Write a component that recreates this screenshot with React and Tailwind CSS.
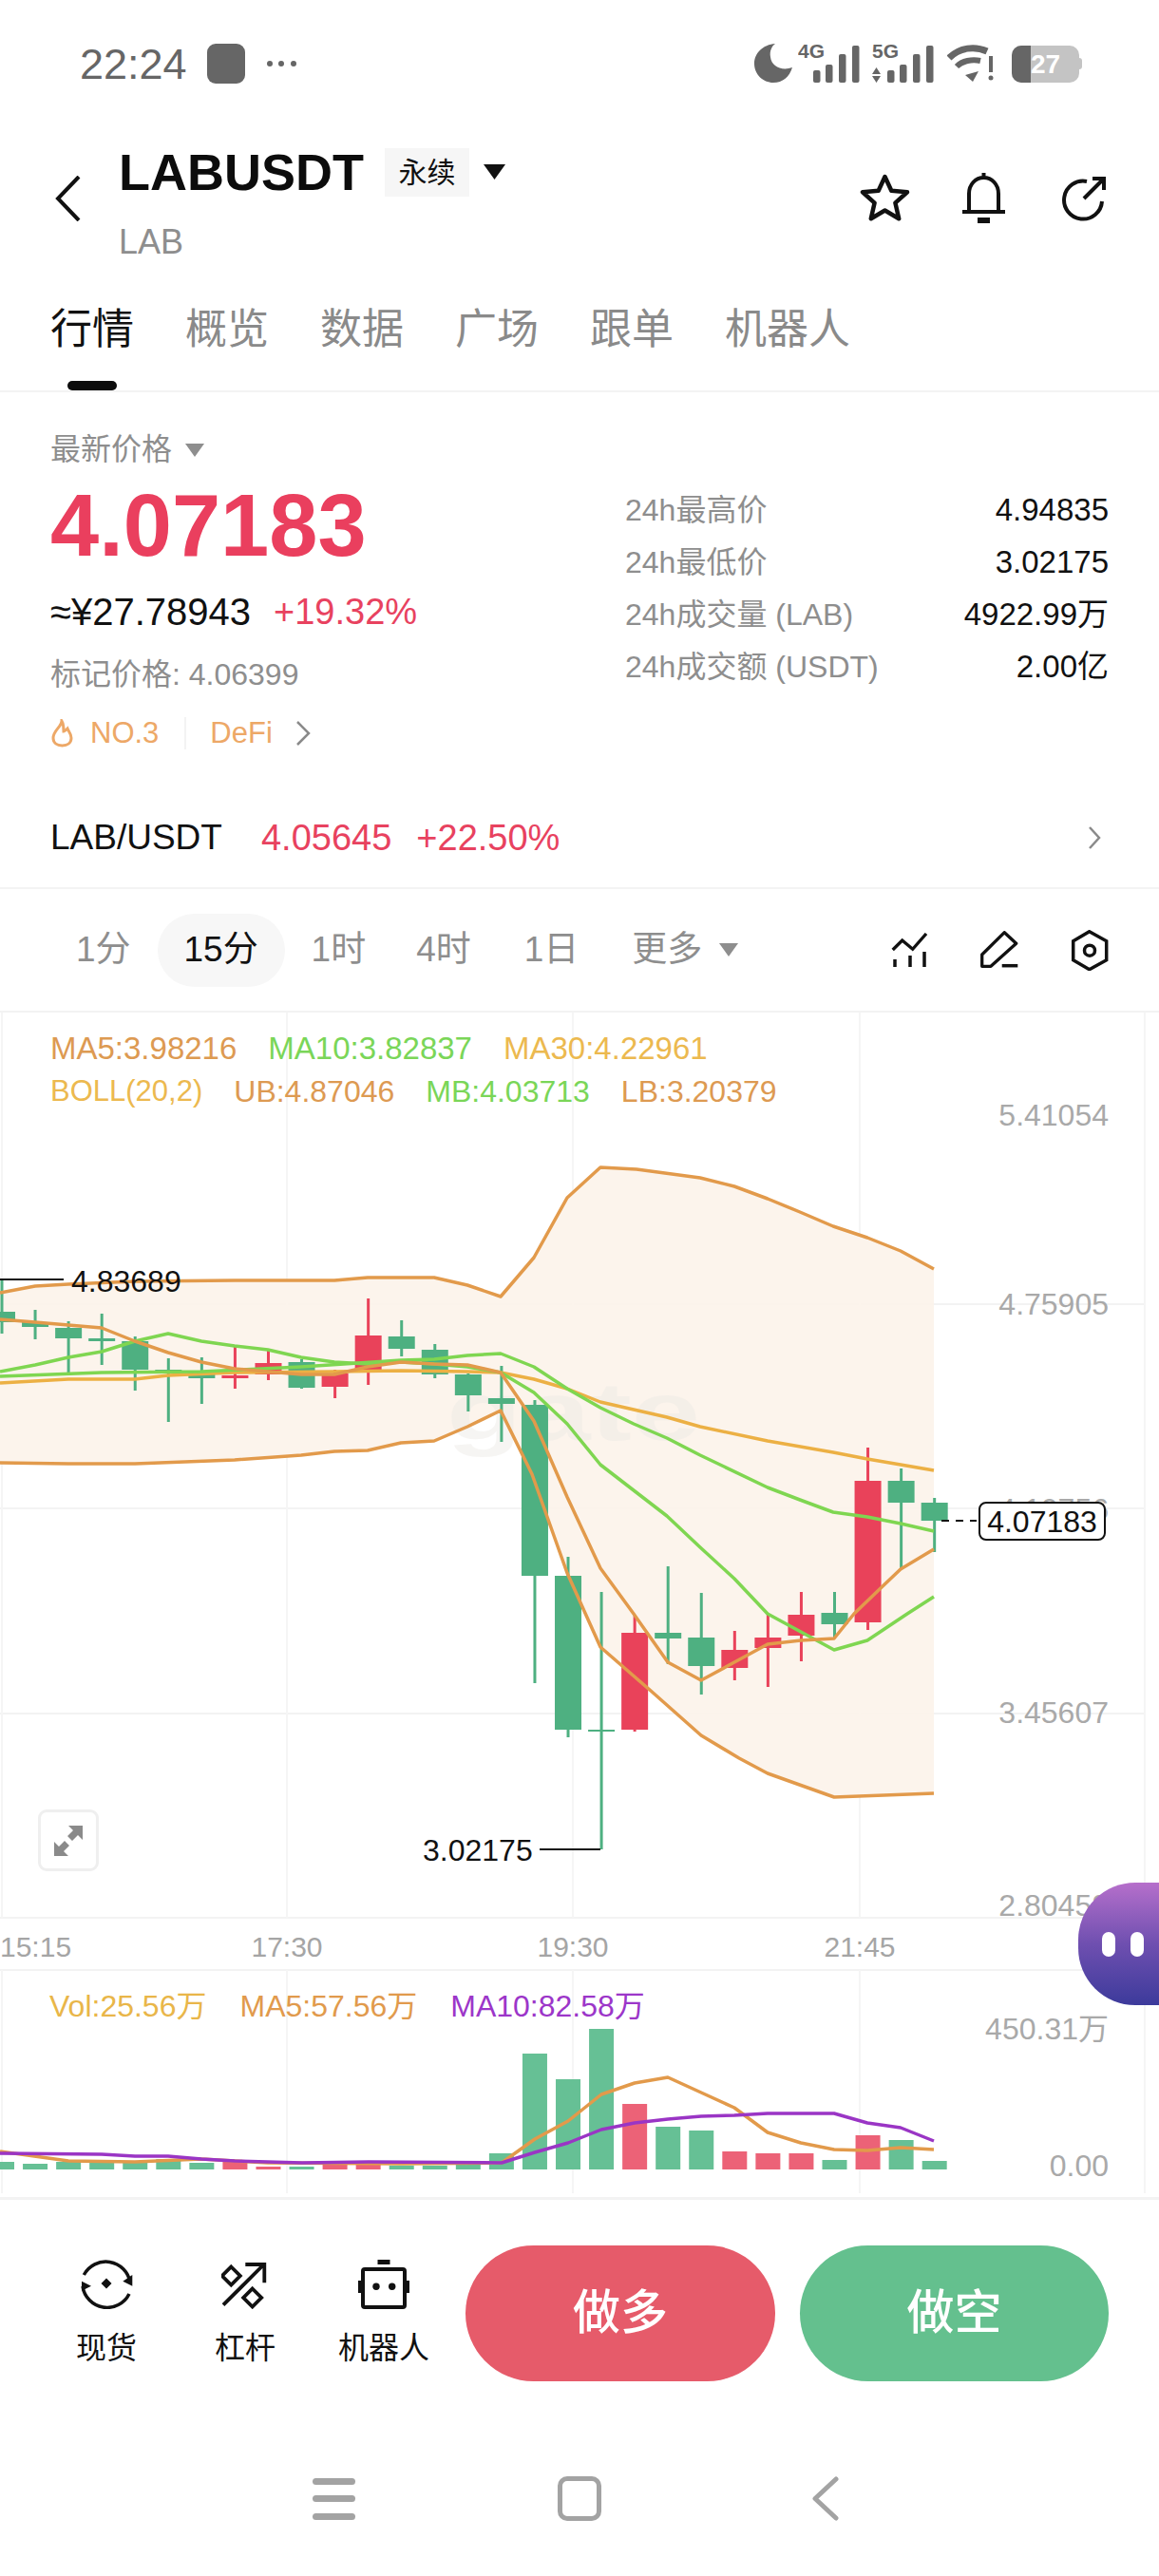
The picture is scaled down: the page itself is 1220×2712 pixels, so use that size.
import React from 'react';

const GREEN = '#4eb081';
const RED = '#e9425a';

// candles: [wick top, body top, body bottom, wick bottom, colour]
const candles = [
  [1348, 1382, 1393, 1405, GREEN], [1380, 1393, 1398, 1411, GREEN], [1392, 1399, 1410, 1447, GREEN],
  [1384, 1410, 1413, 1438, GREEN], [1408, 1413, 1443, 1465, GREEN], [1431, 1443, 1446, 1498, GREEN],
  [1430, 1446, 1452, 1479, GREEN], [1418, 1449, 1452, 1463, RED], [1423, 1436, 1448, 1454, RED],
  [1432, 1435, 1462, 1463, GREEN], [1443, 1447, 1461, 1473, RED], [1368, 1407, 1443, 1459, RED],
  [1391, 1408, 1421, 1429, GREEN], [1416, 1422, 1448, 1452, GREEN], [1447, 1448, 1470, 1487, GREEN],
  [1439, 1473, 1479, 1519, GREEN], [1475, 1480, 1660, 1773, GREEN], [1640, 1660, 1822, 1830, GREEN],
  [1677, 1822, 1824, 1948, GREEN], [1702, 1720, 1822, 1824, RED], [1650, 1720, 1726, 1753, GREEN],
  [1678, 1725, 1755, 1785, GREEN], [1718, 1738, 1757, 1770, RED], [1700, 1725, 1736, 1777, RED],
  [1677, 1701, 1723, 1750, RED], [1677, 1699, 1711, 1726, GREEN], [1525, 1560, 1709, 1717, RED],
  [1547, 1560, 1583, 1653, GREEN], [1578, 1583, 1602, 1635, GREEN],
];

const upper = '0,1362 37,1355 72,1353 142,1350 247,1349 352,1349 387,1346 457,1346 492,1354 527,1366 562,1325 597,1262 632,1230 670,1232 737,1241 773,1250 808,1263 842,1277 877,1292 913,1304 948,1318 983,1337';
const lower = '0,1541 72,1542 142,1542 247,1538 317,1533 352,1529 387,1528 422,1520 457,1518 492,1503 527,1486 560,1553 597,1657 632,1735 685,1781 738,1828 778,1852 808,1868 878,1893 983,1889';
const ma5 = '0,1390 37,1393 72,1396 107,1399 142,1413 177,1425 212,1435 247,1442 282,1445 317,1448 352,1448 387,1440 422,1435 457,1437 492,1438 527,1446 562,1497 597,1577 632,1652 667,1700 703,1751 738,1770 773,1751 808,1732 843,1728 878,1726 899,1700 927,1673 948,1653 983,1632';
const ma10 = '0,1445 37,1438 72,1430 107,1424 142,1413 177,1405 212,1413 247,1418 282,1422 317,1430 352,1435 387,1437 422,1435 457,1437 492,1440 527,1446 562,1467 597,1500 632,1543 702,1597 737,1630 773,1663 808,1700 878,1738 913,1728 955,1700 983,1682';
const mb = '0,1450 107,1446 212,1445 317,1440 422,1433 457,1432 492,1428 527,1426 562,1440 597,1463 632,1483 667,1500 702,1515 737,1533 808,1567 842,1580 877,1593 913,1598 948,1605 983,1613';
const ma30 = '0,1457 72,1453 142,1453 177,1449 247,1446 352,1445 422,1444 492,1445 527,1446 562,1453 597,1463 632,1477 702,1493 737,1503 808,1518 877,1530 913,1537 983,1549';

const bandFill = upper + ' ' + lower.split(' ').reverse().join(' ');

const volTops = [2277, 2279, 2277, 2278, 2278, 2274, 2278, 2277, 2282, 2282, 2280, 2279, 2281, 2281, 2280, 2268, 2163, 2190, 2137, 2216, 2240, 2244, 2266, 2268, 2268, 2275, 2249, 2254, 2276];
const volRed = [7, 8, 10, 11, 19, 22, 23, 24, 26];
const volMa5 = '0,2266 72,2276 142,2277 212,2274 282,2278 423,2279 528,2278 563,2253 598,2234 633,2206 668,2194 703,2188 738,2204 773,2220 808,2246 843,2257 878,2264 913,2265 948,2262 983,2264';
const volMa10 = '0,2268 107,2269 142,2271 177,2271 212,2274 247,2276 318,2278 388,2277 528,2278 563,2267 598,2257 633,2243 668,2236 703,2232 738,2229 773,2228 808,2226 843,2226 878,2226 913,2236 948,2241 983,2255';

function ChartLine({ points, color, width = 3.5 }) {
  return <polyline points={points} fill="none" stroke={color} strokeWidth={width} strokeLinejoin="round" />;
}

function AxisLabel({ y, children }) {
  return <text x="1167" y={y} textAnchor="end" fontSize="32" fill="#a9a9a9">{children}</text>;
}

function ChartDrawing() {
  return (
    <svg className="absolute inset-0" width="1220" height="1247" viewBox="0 1067 1220 1247">
      {[1374, 1589, 1805, 2020, 2075].map((y) => (
        <line key={y} x1="0" x2="1205" y1={y} y2={y} stroke="#f3f3f3" strokeWidth="2" />
      ))}
      {[2, 302, 603, 905, 1205].map((x) => (
        <g key={x}>
          <line x1={x} x2={x} y1="1067" y2="2020" stroke="#f5f5f5" strokeWidth="2" />
          <line x1={x} x2={x} y1="2075" y2="2310" stroke="#f5f5f5" strokeWidth="2" />
        </g>
      ))}
      <polygon points={bandFill} fill="#fcf3ea" fillOpacity="0.92" />
      <text x="470" y="1517" fontSize="88" fontWeight="700" fill="#ece8e4" fillOpacity="0.45" textLength="267" lengthAdjust="spacingAndGlyphs">gate</text>

      <AxisLabel y="1186">5.41054</AxisLabel>
      <AxisLabel y="1385">4.75905</AxisLabel>
      <AxisLabel y="1601">4.10756</AxisLabel>
      <AxisLabel y="1815">3.45607</AxisLabel>
      <AxisLabel y="2018">2.80458</AxisLabel>

      {candles.map(([top, bodyTop, bodyBottom, bottom, color], i) => {
        const x = 2 + 35.06 * i;
        return (
          <g key={i} fill={color}>
            <rect x={x - 1.5} y={top} width="3" height={bottom - top} />
            <rect x={x - 14} y={bodyTop} width="28" height={bodyBottom - bodyTop} />
          </g>
        );
      })}

      <ChartLine points={upper} color="#e29a4b" />
      <ChartLine points={lower} color="#e29a4b" />
      <ChartLine points={ma30} color="#ecb044" />
      <ChartLine points={mb} color="#7fd651" />
      <ChartLine points={ma10} color="#7fd651" />
      <ChartLine points={ma5} color="#e29a4b" />

      <line x1="0" x2="67" y1="1348" y2="1348" stroke="#111" strokeWidth="2" />
      <text x="75" y="1361" fontSize="32" fill="#111">4.83689</text>
      <line x1="568" x2="632" y1="1948" y2="1948" stroke="#111" strokeWidth="2" />
      <text x="445" y="1960" fontSize="32" fill="#111">3.02175</text>

      <line x1="991" x2="1028" y1="1602" y2="1602" stroke="#111" strokeWidth="2" strokeDasharray="8 7" />
      <rect x="1031" y="1583" width="132" height="39" rx="7" fill="#fff" stroke="#111" strokeWidth="2" />
      <text x="1097" y="1614" textAnchor="middle" fontSize="32" fill="#111">4.07183</text>

      <g fontSize="30" fill="#a5a5a5">
        <text x="0" y="2061">15:15</text>
        <text x="302" y="2061" textAnchor="middle">17:30</text>
        <text x="603" y="2061" textAnchor="middle">19:30</text>
        <text x="905" y="2061" textAnchor="middle">21:45</text>
      </g>

      {volTops.map((top, i) => (
        <rect key={i} x={2 + 35.06 * i - 13} y={top} width="26" height={2285 - top} fill={volRed.includes(i) ? '#ec6277' : '#66c095'} />
      ))}
      <ChartLine points={volMa5} color="#e29a4b" />
      <ChartLine points={volMa10} color="#9a35c5" />
      <AxisLabel y="2148">450.31万</AxisLabel>
      <AxisLabel y="2292">0.00</AxisLabel>
    </svg>
  );
}

function StatusBar() {
  return (
    <div className="flex h-[134px] items-center justify-between pl-[84px] pr-[81px] text-[#666]">
      <div className="flex items-center">
        <span className="w-[115px] text-[45px] leading-none">22:24</span>
        <div className="ml-[19px] h-[42px] w-[40px] rounded-[9px] bg-[#666]" />
        <svg className="ml-[22px]" width="34" height="8" fill="#666">
          <circle cx="4" cy="4" r="3" /><circle cx="16" cy="4" r="3" /><circle cx="29" cy="4" r="3" />
        </svg>
      </div>
      <div className="flex items-center">
        <svg width="40" height="42" fill="#666">
          <path d="M22 0C9 1 0 10 0 21C0 32 9 41 20 41C30 41 37 35 40 25C29 29 18 24 17 14C16 8 18 3 22 0Z" />
        </svg>
        <svg className="ml-[6px]" width="66" height="48" viewBox="0 -3 66 48" fill="#666">
          <text x="0" y="15" fontSize="21" fontWeight="700">4G</text>
          <rect x="16" y="28" width="7.500" height="13" rx="2" /><rect x="29" y="22" width="7.500" height="19" rx="2" />
          <rect x="43" y="11" width="7.500" height="30" rx="2" /><rect x="57" y="2" width="7.500" height="39" rx="2" />
        </svg>
        <svg className="ml-[12px]" width="66" height="48" viewBox="0 -3 66 48" fill="#666">
          <text x="0" y="15" fontSize="21" fontWeight="700">5G</text>
          <path d="M4.500 25L9 32H0ZM0 34H9L4.500 41Z" />
          <rect x="16" y="28" width="7.500" height="13" rx="2" /><rect x="29" y="22" width="7.500" height="19" rx="2" />
          <rect x="43" y="11" width="7.500" height="30" rx="2" /><rect x="57" y="2" width="7.500" height="39" rx="2" />
        </svg>
        <svg className="ml-[13px]" width="50" height="41" fill="none" stroke="#666">
          <path d="M2 14C13 3 29 1 42 7" strokeWidth="7" />
          <path d="M10 23C16 17 26 15 35 17" strokeWidth="6" />
          <path d="M19 32L33 28L27 39Z" fill="#666" stroke="none" />
          <path d="M46 12V29" strokeWidth="4" />
          <circle cx="46" cy="35" r="2.500" fill="#666" stroke="none" />
        </svg>
        <div className="ml-[18px] flex items-center">
          <div className="relative flex h-[39px] w-[71px] overflow-hidden rounded-[10px] bg-[#c4c4c4]">
            <div className="h-full w-[20px] bg-[#666]" />
            <span className="absolute left-[20px] top-[4px] text-[28px] font-bold leading-[32px] text-white">27</span>
          </div>
          <div className="h-[12px] w-[3px] rounded-r-sm bg-[#c4c4c4]" />
        </div>
      </div>
    </div>
  );
}

function Header() {
  return (
    <div className="flex h-[156px] items-start pl-[58px] pr-[55px]">
      <svg className="mt-[51px]" width="27" height="48" fill="none" stroke="#111" strokeWidth="4">
        <path d="M25 1L3 24L25 47" />
      </svg>
      <div className="ml-[40px] pt-[21px]">
        <div className="flex h-[52px] items-center">
          <span className="text-[54px] font-bold leading-none text-[#0c0c0c]">LABUSDT</span>
          <span className="ml-[22px] flex h-[51px] w-[89px] items-center justify-center bg-[#f6f6f6] text-[30px] text-[#111]">永续</span>
          <svg className="ml-[15px]" width="23" height="16" fill="#111"><path d="M0 0H23L11.5 16Z" /></svg>
        </div>
        <div className="mt-[26px] h-[44px] text-[36px] leading-[44px] text-[#8e8e8e]">LAB</div>
      </div>
      <div className="ml-auto mt-[48px] flex items-center">
        <svg width="53" height="51" fill="none" stroke="#111" strokeWidth="4.5" strokeLinejoin="round">
          <path d="M26.500 3L33.300 17.700L50 19.300L37.400 30.600L41.200 47.200L26.500 38.500L11.800 47.200L15.600 30.600L3 19.300L19.700 17.700Z" />
        </svg>
        <svg className="ml-[54px]" width="47" height="53" fill="none" stroke="#111" strokeWidth="4">
          <path d="M23.500 0V6M8 39V22C8 12 15 5 23.500 5C32 5 39 12 39 22V39M1 41H46" />
          <rect x="17" y="47" width="13" height="6" fill="#111" stroke="none" />
        </svg>
        <svg className="ml-[58px]" width="48" height="48" fill="none" stroke="#111" strokeWidth="4">
          <path d="M27 6A20 20 0 1 0 43 27" />
          <path d="M24 24L45 3M33 3H45V15" />
        </svg>
      </div>
    </div>
  );
}

function Tabs() {
  const tabs = ['行情', '概览', '数据', '广场', '跟单', '机器人'];
  return (
    <div className="flex h-[123px] gap-[54px] border-b-2 border-[#f3f3f3] pl-[53px] pt-[35px]">
      {tabs.map((tab, i) => (
        <div key={tab} className="flex flex-col items-center">
          <span className={i === 0 ? 'text-[44px] leading-[44px] text-[#111]' : 'text-[44px] leading-[44px] text-[#8a8a8a]'}>{tab}</span>
          {i === 0 && <div className="mt-[32px] h-[10px] w-[52px] rounded-full bg-[#0c0c0c]" />}
        </div>
      ))}
    </div>
  );
}

function PriceSection() {
  const stats = [
    ['24h最高价', '4.94835'],
    ['24h最低价', '3.02175'],
    ['24h成交量 (LAB)', '4922.99万'],
    ['24h成交额 (USDT)', '2.00亿'],
  ];
  return (
    <div className="flex h-[417px] justify-between px-[53px]">
      <div className="pt-[40px]">
        <div className="flex h-[40px] items-center text-[32px] text-[#8e8e8e]">
          最新价格
          <svg className="ml-[14px] mt-[2px]" width="20" height="14" fill="#8e8e8e"><path d="M0 0H20L10 14Z" /></svg>
        </div>
        <div className="mt-[10px] flex h-[100px] items-center text-[92px] font-bold leading-none text-[#ea3f5e]">4.07183</div>
        <div className="mt-[16px] flex h-[50px] items-center text-[40px] leading-none text-[#111]">
          ≈¥27.78943
          <span className="ml-[24px] text-[38px] text-[#e8425f]">+19.32%</span>
        </div>
        <div className="mt-[19px] flex h-[44px] items-center text-[32px] text-[#8e8e8e]">标记价格: 4.06399</div>
        <div className="mt-[20px] flex h-[40px] items-center text-[31px] text-[#eda867]">
          <svg width="25" height="30" fill="none" stroke="#eda867" strokeWidth="3">
            <path d="M12 2C12 8 3 12 3 20C3 25 7 28 12.500 28C18 28 22 25 22 20C22 15 19 13 18 10C16 12 15 13 14 13C14 9 14 5 12 2Z" />
          </svg>
          <span className="ml-[17px]">NO.3</span>
          <div className="ml-[27px] h-[34px] w-[2px] bg-[#f3f3f3]" />
          <span className="ml-[25px]">DeFi</span>
          <svg className="ml-[24px]" width="16" height="26" fill="none" stroke="#8a8a8a" strokeWidth="2.500"><path d="M2 1L14 13L2 25" /></svg>
        </div>
      </div>
      <div className="w-[509px] pt-[96px]">
        {stats.map(([label, value]) => (
          <div key={label} className="flex h-[55px] items-center justify-between text-[32px]">
            <span className="text-[#8e8e8e]">{label}</span>
            <span className="text-[33px] text-[#111]">{value}</span>
          </div>
        ))}
      </div>
    </div>
  );
}

function PairRow() {
  return (
    <div className="flex h-[106px] items-center border-b-2 border-[#f3f3f3] pl-[53px] pr-[61px]">
      <span className="text-[37px] text-[#111]">LAB/USDT</span>
      <span className="ml-[41px] text-[38px] text-[#e8425f]">4.05645</span>
      <span className="ml-[26px] text-[38px] text-[#e8425f]">+22.50%</span>
      <svg className="ml-auto" width="13" height="24" fill="none" stroke="#8a8a8a" strokeWidth="2.500"><path d="M1 1L11 12L1 23" /></svg>
    </div>
  );
}

function TimeframeRow() {
  return (
    <div className="flex h-[130px] items-center border-b-2 border-[#f3f3f3] pl-[80px] pr-[53px] text-[37px] text-[#8e8e8e]">
      <span>1分</span>
      <span className="ml-[28px] flex h-[77px] w-[134px] items-center justify-center rounded-full bg-[#f7f7f7] text-[#111]">15分</span>
      <span className="ml-[28px]">1时</span>
      <span className="ml-[53px]">4时</span>
      <span className="ml-[56px]">1日</span>
      <span className="ml-[56px]">更多</span>
      <svg className="ml-[18px]" width="20" height="14" fill="#8e8e8e"><path d="M0 0H20L10 14Z" /></svg>
      <div className="ml-auto flex items-center">
        <svg width="39" height="37" fill="none" stroke="#111" strokeWidth="3.300">
          <path d="M1.700 18L11.700 8L22.700 17.300L37 1" />
          <path d="M4 28V36M20 24V36M35 20V36" strokeWidth="3.500" />
        </svg>
        <svg className="ml-[55px]" width="41" height="40" fill="none" stroke="#111" strokeWidth="3.300">
          <path d="M25.300 1.700L37.700 13.300L11 37.300H1.700V25Z" strokeLinejoin="round" />
          <path d="M22.700 36.700H39.300" strokeWidth="3.500" />
        </svg>
        <svg className="ml-[54px]" width="40" height="43" fill="none" stroke="#111" strokeWidth="3.500">
          <path d="M19.700 1.700L37.700 11.700V31.700L19.700 41.700L2.700 31.700V11.700Z" />
          <circle cx="20" cy="21.700" r="5.500" />
        </svg>
      </div>
    </div>
  );
}

function Chart() {
  return (
    <div className="relative h-[1247px] overflow-hidden">
      <ChartDrawing />
      <div className="relative px-[53px] pt-[17px] leading-[42px]">
        <div className="flex gap-[33px] text-[33px]">
          <span className="text-[#dd9a52]">MA5:3.98216</span>
          <span className="text-[#7ad658]">MA10:3.82837</span>
          <span className="text-[#ecb94f]">MA30:4.22961</span>
        </div>
        <div className="mt-[3px] flex gap-[33px] text-[32px]">
          <span className="text-[31px] text-[#ecb94f]">BOLL(20,2)</span>
          <span className="text-[#dd9a52]">UB:4.87046</span>
          <span className="text-[#7ad658]">MB:4.03713</span>
          <span className="text-[#dd9a52]">LB:3.20379</span>
        </div>
      </div>
      <div className="absolute left-[40px] top-[839px] flex h-[65px] w-[64px] items-center justify-center rounded-[9px] border-[3px] border-[#efefef] bg-white">
        <svg width="32" height="32" fill="#8a8a8a">
          <path d="M31 0V15L26 10L20 16L15 11L21 5L16 0Z" />
          <path d="M1 32V17L6 22L12 16L17 21L11 27L16 32Z" />
        </svg>
      </div>
      <div className="absolute left-[52px] top-[1025px] flex gap-[35px] text-[32px] leading-[42px]">
        <span className="text-[#e9b649]">Vol:25.56万</span>
        <span className="text-[#e19a4c]">MA5:57.56万</span>
        <span className="text-[#9c36c9]">MA10:82.58万</span>
      </div>
      <div className="absolute left-[1135px] top-[916px] flex h-[129px] w-[85px] items-center gap-[16px] rounded-l-[60px] bg-linear-to-b from-[#b66fcb] via-[#6f4fb0] to-[#3c3a9b] pl-[25px]">
        <div className="h-[26px] w-[14px] rounded-full bg-white" />
        <div className="h-[26px] w-[14px] rounded-full bg-white" />
      </div>
    </div>
  );
}

function BottomBar() {
  return (
    <div className="border-t-[3px] border-[#f3f3f3]">
      <div className="flex pl-[39px] pt-[48px]">
        <div className="flex w-[146px] flex-col items-center pt-[13px]">
          <svg width="55" height="54" fill="none" stroke="#111" strokeWidth="3.500">
            <path d="M3.300 18A26 26 0 0 1 52 26" />
            <path d="M51 38A26 26 0 0 1 2 30" />
            <path d="M44.300 24.700L54.300 18V29.700ZM1 24.700L11 29.700L1 34.700Z" fill="#111" stroke="none" />
            <path d="M27 21.500L32.500 27L27 32.500L21.500 27Z" fill="#111" stroke="none" />
          </svg>
          <span className="mt-[19px] h-[44px] text-[32px] leading-[44px] text-[#111]">现货</span>
        </div>
        <div className="flex w-[146px] flex-col items-center pt-[13px]">
          <svg width="50" height="54" fill="none" stroke="#111" strokeWidth="3.800">
            <path d="M2 49.700L43.700 8M25.300 7H45.300V26.300" />
            <path d="M10.300 9.500L19.800 19L10.300 28.500L0.800 19Z" />
            <path d="M32.700 32.500L42.200 42L32.700 51.500L23.200 42Z" />
          </svg>
          <span className="mt-[19px] h-[44px] text-[32px] leading-[44px] text-[#111]">杠杆</span>
        </div>
        <div className="flex w-[146px] flex-col items-center pt-[13px]">
          <svg width="54" height="54" fill="#111">
            <rect x="20.500" y="2" width="13" height="5" />
            <rect x="5" y="12" width="44" height="40" rx="2" fill="none" stroke="#111" strokeWidth="4" />
            <rect x="0" y="24" width="3" height="13" /><rect x="51" y="24" width="3" height="13" />
            <circle cx="19" cy="30.300" r="3.700" /><circle cx="35.700" cy="30.300" r="3.700" />
          </svg>
          <span className="mt-[19px] h-[44px] text-[32px] leading-[44px] text-[#111]">机器人</span>
        </div>
        <div className="ml-[13px] flex h-[143px] w-[326px] items-center justify-center rounded-full bg-[#e65b6a] text-[50px] font-medium text-white">做多</div>
        <div className="ml-[26px] flex h-[143px] w-[325px] items-center justify-center rounded-full bg-[#64c08e] text-[50px] font-medium text-white">做空</div>
      </div>
      <div className="mt-[100px] flex items-center pl-[329px]">
        <div className="flex h-[44px] w-[45px] flex-col justify-between">
          <div className="h-[7px] rounded-full bg-[#a3a3a3]" />
          <div className="h-[7px] rounded-full bg-[#a3a3a3]" />
          <div className="h-[7px] rounded-full bg-[#a3a3a3]" />
        </div>
        <div className="ml-[213px] h-[47px] w-[46px] rounded-[10px] border-[5px] border-[#a3a3a3]" />
        <svg className="ml-[221px]" width="29" height="47" fill="none" stroke="#a3a3a3" strokeWidth="5" strokeLinecap="round" strokeLinejoin="round">
          <path d="M26 3L4 23.500L26 44" />
        </svg>
      </div>
    </div>
  );
}

export default function App() {
  return (
    <div className="h-[2712px] w-[1220px] overflow-hidden bg-white font-['Liberation_Sans','Noto_Sans_CJK_SC',sans-serif]">
      <StatusBar />
      <Header />
      <Tabs />
      <PriceSection />
      <PairRow />
      <TimeframeRow />
      <Chart />
      <BottomBar />
    </div>
  );
}
